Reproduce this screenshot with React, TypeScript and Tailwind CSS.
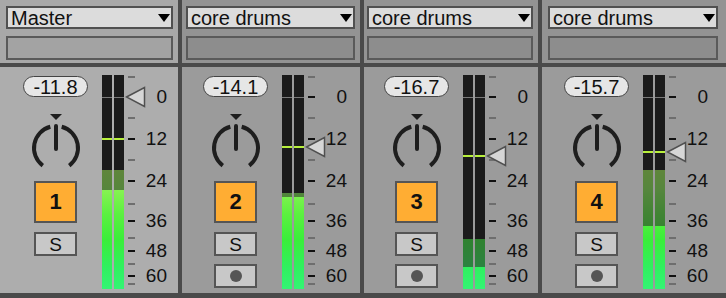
import React from "react";

const H = 214;
const GRAD =
  "linear-gradient(to bottom, #d4f040 0%, #b0f048 35%, #86f252 54%, #5cf040 65%, #3aee3a 77%, #30f060 90%, #34f474 100%)";

type Col = {
  name: string;
  vol: string;
  num: string;
  rec: boolean;
  master: boolean;
  w: string;
  pl: string;
  dpad: string;
  peak: number;
  tri: number;
  dark: number;
  bright: number;
};

const cols: Col[] = [
  { name: "Master", vol: "-11.8", num: "1", rec: false, master: true, w: "w-[178px]", pl: "pl-[23px]", dpad: "pl-[6px] pr-[5px]", peak: 64, tri: 22, dark: 95, bright: 115 },
  { name: "core drums", vol: "-14.1", num: "2", rec: true, master: false, w: "w-[178px]", pl: "pl-[21px]", dpad: "pl-[4px] pr-[5px]", peak: 72, tri: 72, dark: 118, bright: 122 },
  { name: "core drums", vol: "-16.7", num: "3", rec: true, master: false, w: "w-[174px]", pl: "pl-[20px]", dpad: "pl-[3px] pr-[5px]", peak: 81, tri: 81, dark: 164, bright: 192 },
  { name: "core drums", vol: "-15.7", num: "4", rec: true, master: false, w: "flex-1", pl: "pl-[22px]", dpad: "pl-[6px] pr-[8px]", peak: 77, tri: 77, dark: 95, bright: 151 },
];

const major = [
  { y: 22, l: "0" },
  { y: 64, l: "12" },
  { y: 106, l: "24" },
  { y: 146, l: "36" },
  { y: 176, l: "48" },
  { y: 201, l: "60" },
];
const minor = [2, 43, 85, 129, 163, 189, 209];

function Bar({ c }: { c: Col }) {
  return (
    <div className="relative w-[10px] h-[214px] bg-[#1b1b1b] flex flex-col">
      <div className="shrink-0" style={{ height: c.dark }} />
      <div
        className="shrink-0 brightness-[0.57] saturate-[0.8]"
        style={{
          height: c.bright - c.dark,
          backgroundImage: GRAD,
          backgroundSize: `100% ${H}px`,
          backgroundPosition: `0 -${c.dark}px`,
        }}
      />
      <div
        className="flex-1"
        style={{
          backgroundImage: GRAD,
          backgroundSize: `100% ${H}px`,
          backgroundPosition: `0 -${c.bright}px`,
        }}
      />
      <div className="absolute left-0 right-0 top-[22px] h-px bg-[#7a7a7a]" />
      <div className="absolute left-0 right-0 h-[2px] bg-[#b8f03c]" style={{ top: c.peak - 1 }} />
    </div>
  );
}

function Knob() {
  return (
    <svg width="56" height="56" viewBox="0 0 56 56" className="mt-[17px]">
      <polygon points="22,0 34,0 28,6" fill="#1e1e1e" />
      <path d="M14.76 51.57 A22 22 0 0 1 22.31 12.75" fill="none" stroke="#1e1e1e" strokeWidth="4" />
      <path d="M33.69 12.75 A22 22 0 0 1 41.24 51.57" fill="none" stroke="#1e1e1e" strokeWidth="4" />
      <line x1="28" y1="12" x2="28" y2="35" stroke="#1e1e1e" strokeWidth="4" strokeLinecap="round" />
    </svg>
  );
}

function Column({ c }: { c: Col }) {
  const top = c.master ? "bg-[#a8a8a8]" : "bg-[#939393]";
  const box = c.master ? "bg-[#a3a3a3]" : "bg-[#8d8d8d]";
  const low = c.master ? "bg-[#adadad]" : "bg-[#9b9b9b]";
  return (
    <div className={`${c.w} flex flex-col gap-[4px]`}>
      <div className={`h-[63px] ${top} ${c.dpad} pt-[6px] flex flex-col`}>
        <div className="h-[23px] bg-[#dcdcdc] border-2 border-[#505050] flex items-center justify-between pl-[3px] pr-[1px]">
          <span className="text-[20px] leading-none text-[#111] whitespace-nowrap">{c.name}</span>
          <svg width="12" height="8" viewBox="0 0 12 8">
            <polygon points="0,0 12,0 6,8" fill="#000" />
          </svg>
        </div>
        <div className={`mt-[7px] h-[24px] ${box} border-2 border-[#5a5a5a]`} />
      </div>
      <div className={`h-[226px] ${low} ${c.pl} flex items-start`}>
        <div className="w-[65px] flex flex-col items-center">
          <div className="mt-[9px] h-[21px] w-[65px] rounded-full bg-[#e6e6e6] border-[1.5px] border-[#444] flex items-center justify-center text-[20px] leading-none text-[#111]">
            {c.vol}
          </div>
          <Knob />
          <div className="mt-[11px] h-[42px] w-[43px] bg-[#ffad33] border-2 border-[#555] flex items-center justify-center text-[22px] font-bold leading-none text-[#111]">
            {c.num}
          </div>
          <div className="mt-[9px] h-[24px] w-[43px] bg-[#c8c8c8] border-2 border-[#555] flex items-center justify-center text-[19px] leading-none text-[#111]">
            S
          </div>
          {c.rec && (
            <div className="mt-[8px] h-[24px] w-[43px] bg-[#c8c8c8] border-2 border-[#555] flex items-center justify-center">
              <div className="w-[12px] h-[12px] rounded-full bg-[#555]" />
            </div>
          )}
        </div>
        <div className="ml-[14px] mt-[8px] flex gap-[2px]">
          <Bar c={c} />
          <Bar c={c} />
        </div>
        <div className="ml-[4px] mt-[8px] relative w-[39px] h-[214px]">
          {minor.map((y) => (
            <div key={"m" + y} className="absolute left-0 w-[7px] h-[2px] bg-[#6e6e6e]" style={{ top: y - 1 }} />
          ))}
          {major.map((m) => (
            <React.Fragment key={m.l}>
              <div className="absolute left-0 w-[7px] h-[2px] bg-[#111]" style={{ top: m.y - 1 }} />
              <div
                className="absolute right-0 h-[20px] leading-[20px] text-[19px] text-[#111]"
                style={{ top: m.y - 10 }}
              >
                {m.l}
              </div>
            </React.Fragment>
          ))}
          <svg
            width="21"
            height="22"
            viewBox="0 0 21 22"
            className="absolute left-[-3px]"
            style={{ top: c.tri - 11 }}
          >
            <polygon points="1.5,11 19.5,1.5 19.5,20.5" fill="#d6d6d6" stroke="#505050" strokeWidth="1.5" />
          </svg>
        </div>
      </div>
    </div>
  );
}

export default function App() {
  return (
    <div className="w-[726px] h-[298px] bg-[#4a4a4a] flex gap-[4px] overflow-hidden font-['Liberation_Sans',Arial,sans-serif]">
      {cols.map((c, i) => (
        <Column key={i} c={c} />
      ))}
    </div>
  );
}
